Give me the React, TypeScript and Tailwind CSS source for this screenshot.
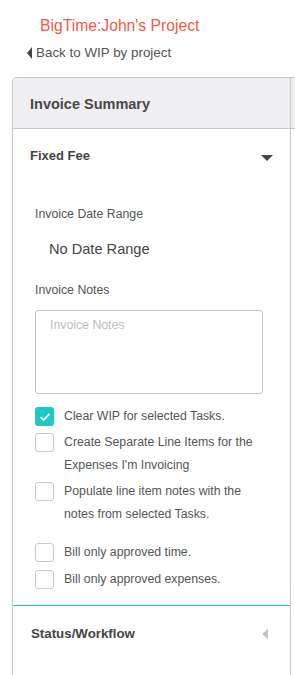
const options = [
  { label: 'Clear WIP for selected Tasks.', checked: true, gap: 'mt-0' },
  { label: "Create Separate Line Items for the Expenses I'm Invoicing", checked: false, gap: 'mt-[3px]' },
  { label: 'Populate line item notes with the notes from selected Tasks.', checked: false, gap: 'mt-[3px]' },
  { label: 'Bill only approved time.', checked: false, gap: 'mt-[15px]' },
  { label: 'Bill only approved expenses.', checked: false, gap: 'mt-[4px]' },
];

function Checkbox({ checked }: { checked: boolean }) {
  if (checked) {
    return (
      <span className="mt-[2px] flex h-[19px] w-[19px] shrink-0 items-center justify-center rounded-[3px] bg-[#1fc8c8]">
        <svg width="12" height="10" viewBox="0 0 12 10" fill="none">
          <path d="M1.5 5.2 4.5 8 10.5 1.8" stroke="white" strokeWidth="1.8" />
        </svg>
      </span>
    );
  }
  return <span className="mt-[2px] h-[19px] w-[19px] shrink-0 rounded-[3px] border border-[#c9c9c9] bg-white" />;
}

export default function App() {
  return (
    <div className="h-[675px] w-[295px] overflow-hidden bg-white font-['Liberation_Sans',Arial,sans-serif]">
      {/* Page title */}
      <div className="pl-[40px] pt-[17px] text-[15.7px] leading-[18px] text-[#f2584a]">BigTime:John's Project</div>
      <div className="mt-[10px] flex items-center pl-[27px] text-[13.4px] leading-[16px] text-[#555]">
        <span className="mr-[4px] h-0 w-0 border-y-[6px] border-r-[5px] border-y-transparent border-r-[#444]" />
        Back to WIP by project
      </div>

      {/* Panels */}
      <div className="mt-[16px] flex">
        <div className="ml-[12px] h-[600px] w-[279px] shrink-0 rounded-tl-[5px] border-x border-t border-[#c8c8c8]">
          <div className="flex h-[51px] items-center rounded-tl-[5px] border-b border-[#c8c8c8] bg-[#efeff1] pl-[17px] pt-[3px] text-[14.5px] font-bold text-[#484848]">
            Invoice Summary
          </div>

          <div className="flex items-center justify-between pl-[17px] pr-[17px] pt-[19px]">
            <span className="text-[13px] font-bold leading-[16px] text-[#444]">Fixed Fee</span>
            <span className="mt-[3px] h-0 w-0 border-x-[6px] border-t-[6px] border-x-transparent border-t-[#444]" />
          </div>

          <div className="pl-[22px]">
            <div className="mt-[43px] text-[12.3px] leading-[14px] text-[#555]">Invoice Date Range</div>
            <div className="mt-[19px] pl-[14px] text-[14.6px] leading-[18px] text-[#444]">No Date Range</div>
            <div className="mt-[25px] text-[12.3px] leading-[14px] text-[#555]">Invoice Notes</div>
            <textarea
              placeholder="Invoice Notes"
              className="mt-[13px] block h-[84px] w-[228px] resize-none rounded-[3px] border border-[#c4c4c4] px-[14px] pt-[7px] text-[12.3px] leading-[14px] text-[#444] placeholder:text-[#bdbdbd] focus:outline-none"
            />

            <div className="mt-[11px] w-[222px]">
              {options.map((o) => (
                <div key={o.label} className={`flex gap-[10px] ${o.gap}`}>
                  <Checkbox checked={o.checked} />
                  <span className="text-[12.3px] leading-[23px] text-[#555]">{o.label}</span>
                </div>
              ))}
            </div>
          </div>

          <div className="mt-[14px] border-t border-[#22c2c2]" />

          <div className="flex items-center justify-between pl-[18px] pr-[22px] pt-[20px]">
            <span className="text-[13.3px] font-bold leading-[16px] text-[#444]">Status/Workflow</span>
            <span className="h-0 w-0 border-y-[5px] border-r-[6px] border-y-transparent border-r-[#c4c4c4]" />
          </div>
        </div>
        <div className="flex-1 border-t border-[#c8c8c8]">
          <div className="h-[51px] border-b border-[#c8c8c8] bg-[#efeff1]" />
        </div>
      </div>
    </div>
  );
}
